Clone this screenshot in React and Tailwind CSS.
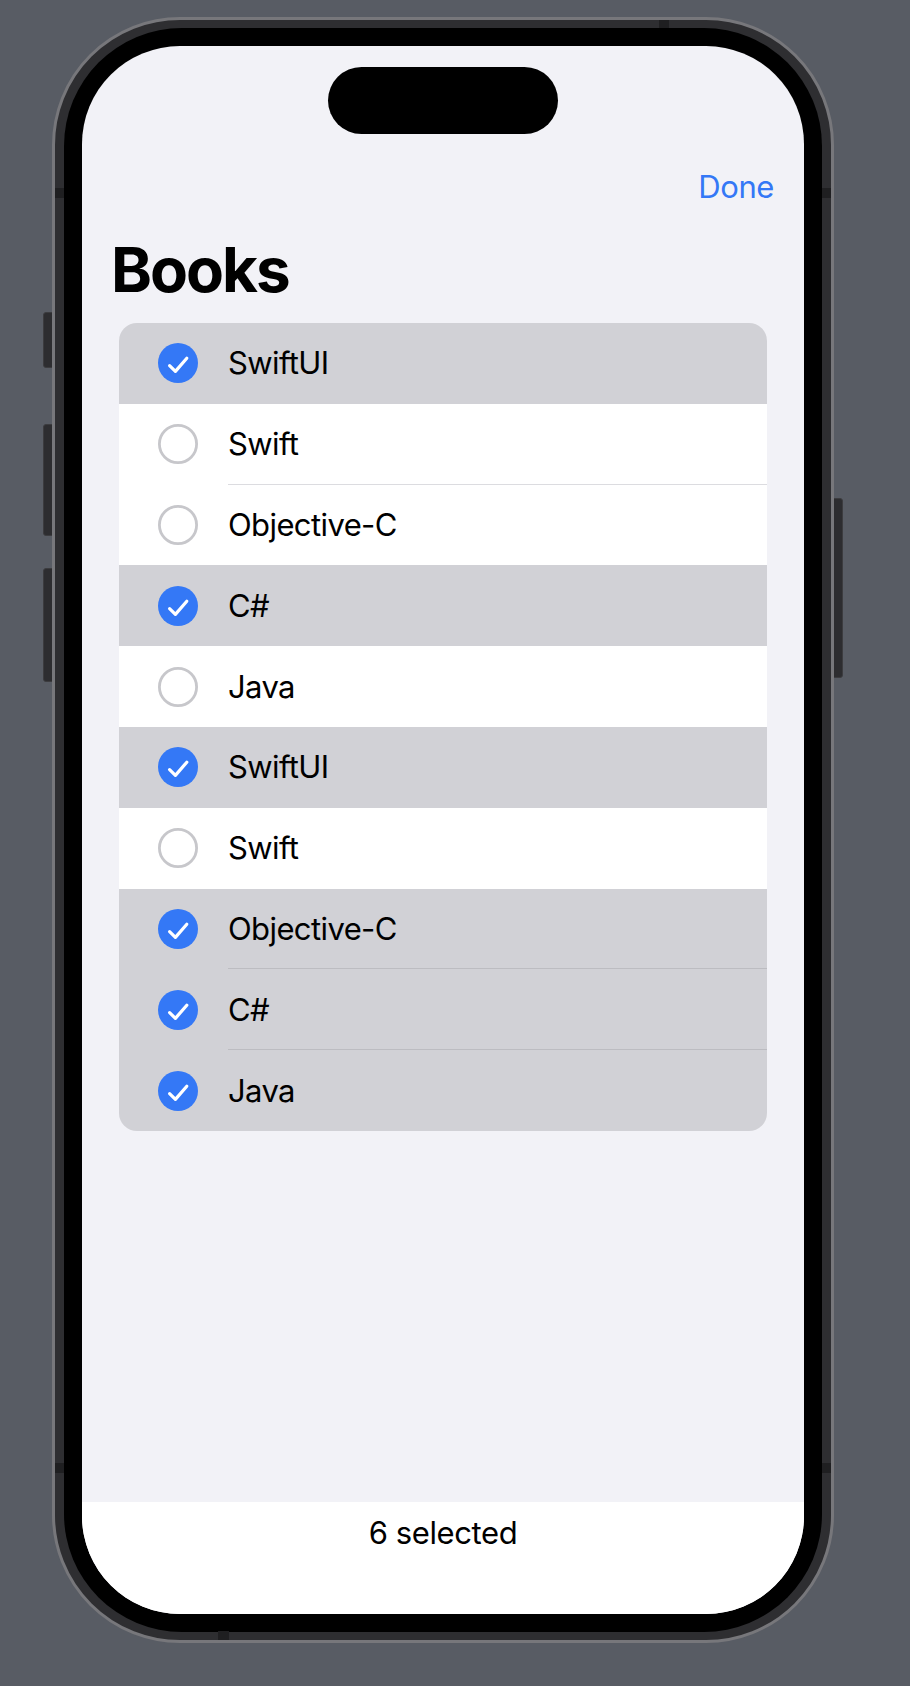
import React from "react";

const books = [
  { name: "SwiftUI", on: true },
  { name: "Swift", on: false },
  { name: "Objective-C", on: false },
  { name: "C#", on: true },
  { name: "Java", on: false },
  { name: "SwiftUI", on: true },
  { name: "Swift", on: false },
  { name: "Objective-C", on: true },
  { name: "C#", on: true },
  { name: "Java", on: true },
];

function SelectMark({ on }) {
  if (on) {
    return (
      <svg width="40" height="40" viewBox="0 0 40 40" className="block">
        <circle cx="20" cy="20" r="20" fill="#3478f6" />
        <path
          d="M11.6 22.6 L17.4 28.4 L28.8 15.2"
          fill="none"
          stroke="#fff"
          strokeWidth="3.2"
          strokeLinecap="round"
          strokeLinejoin="round"
        />
      </svg>
    );
  }
  return (
    <svg width="40" height="40" viewBox="0 0 40 40" className="block">
      <circle cx="20" cy="20" r="18.6" fill="none" stroke="#c7c7cb" strokeWidth="2.8" />
    </svg>
  );
}

function BookRow({ name, on, divider }) {
  return (
    <div className={on ? "flex h-[80.8px] items-center bg-[#d1d1d6]" : "flex h-[80.8px] items-center bg-white"}>
      <div className="ml-[39px] mr-[30px] shrink-0">
        <SelectMark on={on} />
      </div>
      <div
        className={
          divider
            ? on
              ? "flex h-full flex-1 items-center border-b border-[#bcbcc1]"
              : "flex h-full flex-1 items-center border-b border-[#dcdce0]"
            : "flex h-full flex-1 items-center border-b border-transparent"
        }
      >
        <span className="text-[31px] leading-[37px] tracking-[-0.6px] text-black">{name}</span>
      </div>
    </div>
  );
}

function SideButton({ className }) {
  return <div className={"w-[12px] border border-[#3c3c3f] bg-[#2d2d30] " + className} />;
}

export default function App() {
  return (
    <div className="flex h-[1686px] w-[910px] items-start overflow-hidden bg-[#585c64] pl-[43px] pt-[17px] font-['Inter','Noto_Sans',sans-serif]">
      {/* left hardware buttons: action, volume up, volume down */}
      <div className="-mr-[3px] flex flex-col pt-[295px]">
        <SideButton className="h-[56px] rounded-l-[3px]" />
        <SideButton className="mt-[56px] h-[112px] rounded-l-[3px]" />
        <SideButton className="mt-[32px] h-[114px] rounded-l-[3px]" />
      </div>

      {/* frame */}
      <div className="relative z-10 h-[1626px] w-[782px] rounded-[128px] border-[3px] border-[#77777b] bg-[#2e2e31] px-[9px] py-[8px]">
        {/* antenna bands */}
        <div className="absolute left-[604px] top-0 h-[8px] w-[10px] bg-[#1f1f21]" />
        <div className="absolute bottom-0 left-[163px] h-[9px] w-[11px] bg-[#1f1f21]" />
        <div className="absolute left-0 top-[168px] h-[10px] w-[9px] bg-[#1f1f21]" />
        <div className="absolute left-0 top-[1443px] h-[10px] w-[9px] bg-[#1f1f21]" />
        <div className="absolute right-0 top-[168px] h-[10px] w-[9px] bg-[#1f1f21]" />
        <div className="absolute right-0 top-[1443px] h-[10px] w-[9px] bg-[#1f1f21]" />

        <div className="h-full w-full rounded-[118px] bg-black p-[18px]">
          {/* screen */}
          <div className="relative flex h-full w-full flex-col overflow-hidden rounded-[98px] bg-[#f2f2f7]">
            {/* dynamic island */}
            <div className="absolute left-[246px] top-[21px] h-[67px] w-[230px] rounded-full bg-black" />

            <div className="mt-[122px] flex h-[37px] justify-end pr-[30px]">
              <span className="text-[31px] leading-[37px] tracking-[-0.4px] text-[#3478f6]">Done</span>
            </div>

            <h1 className="ml-[29px] mt-[34px] h-[62px] text-[62px] font-bold leading-[62px] tracking-[-2px] text-black">
              Books
            </h1>

            <div className="mx-[37px] mt-[22px] overflow-hidden rounded-[18px]">
              {books.map((b, i) => {
                const next = books[i + 1];
                const divider = next ? next.on === b.on : false;
                return <BookRow key={i} name={b.name} on={b.on} divider={divider} />;
              })}
            </div>

            <div className="flex-1" />

            <div className="flex h-[112px] justify-center bg-white pt-[12px]">
              <span className="text-[31px] leading-[37px] tracking-[-0.4px] text-black">6 selected</span>
            </div>
          </div>
        </div>
      </div>

      {/* right side button */}
      <div className="-ml-[3px] flex flex-col pt-[481px]">
        <SideButton className="h-[180px] rounded-r-[3px]" />
      </div>
    </div>
  );
}
